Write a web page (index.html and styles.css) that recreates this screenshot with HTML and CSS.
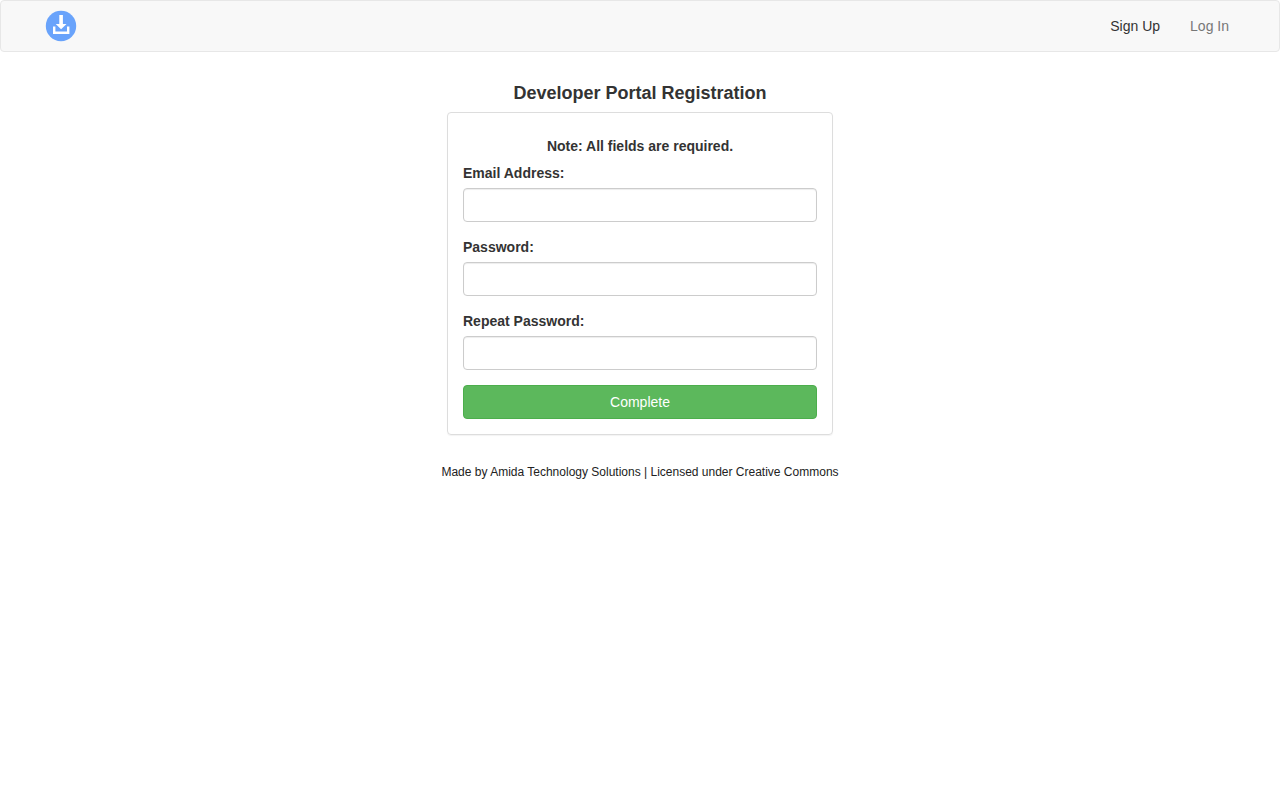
FILE: index.html
```html
<!DOCTYPE html>
<html lang="en">
<head>
<meta charset="utf-8">
<meta name="viewport" content="width=device-width, initial-scale=1">
<title>Developer Portal Registration</title>
<link rel="stylesheet" href="styles.css">
</head>
<body>
<nav class="navbar">
  <a class="brand" href="#" aria-label="Home">
    <svg class="logo" viewBox="0 0 30 30" aria-hidden="true">
      <circle cx="15" cy="15" r="15.2" fill="#69a3fb"/>
      <path d="M13.3 4h3.6v9h3.6L15.1 18.2 9.7 13h3.6z" fill="#fff"/>
      <path d="M7 15.4h2.4v5H21v-5h2.4v7.5H7z" fill="#fff"/>
    </svg>
  </a>
  <ul class="nav">
    <li><a class="nav-link active" href="#">Sign Up</a></li>
    <li><a class="nav-link" href="#">Log In</a></li>
  </ul>
</nav>
<main class="content">
  <h4 class="title">Developer Portal Registration</h4>
  <form class="panel">
    <h5 class="note">Note: All fields are required.</h5>
    <div class="field">
      <label class="label" for="email">Email Address:</label>
      <input class="input" type="email" id="email" required>
    </div>
    <div class="field">
      <label class="label" for="password">Password:</label>
      <input class="input" type="password" id="password" required>
    </div>
    <div class="field">
      <label class="label" for="repeat">Repeat Password:</label>
      <input class="input" type="password" id="repeat" required>
    </div>
    <button class="submit" type="submit">Complete</button>
  </form>
</main>
<footer class="footer">Made by Amida Technology Solutions | Licensed under Creative Commons</footer>
</body>
</html>
```

FILE: styles.css
```css
* {
  box-sizing: border-box;
}

body {
  margin: 0;
  background: #fff;
  color: #333;
  font-family: "Helvetica Neue", Helvetica, "Liberation Sans", Arial, sans-serif;
  font-size: 14px;
  line-height: 20px;
}

.navbar {
  display: flex;
  align-items: center;
  justify-content: space-between;
  min-height: 52px;
  padding: 0 35px 0 45px;
  border: 1px solid #e7e7e7;
  border-radius: 4px;
  background: #f8f8f8;
}

.brand,
.logo {
  display: block;
}

.logo {
  width: 30px;
  height: 30px;
  overflow: visible;
}

.nav {
  display: flex;
  margin: 0;
  padding: 0;
  list-style: none;
}

.nav-link {
  display: block;
  padding: 15px;
  color: #777;
  text-decoration: none;
}

.nav-link.active {
  color: #333;
}

.content {
  max-width: 386px;
  margin: 30px auto 0;
}

.title {
  margin: 0 0 8px;
  font-size: 18px;
  line-height: 22px;
  text-align: center;
}

.panel {
  padding: 25px 15px 15px;
  border: 1px solid #ddd;
  border-radius: 4px;
  box-shadow: 0 1px 1px rgba(0, 0, 0, 0.05);
}

.note {
  margin: 0 0 8px;
  font-size: 14px;
  line-height: 17px;
  text-align: center;
}

.field {
  margin-bottom: 15px;
}

.label {
  display: block;
  margin-bottom: 5px;
  font-weight: bold;
}

.input {
  display: block;
  width: 100%;
  height: 34px;
  padding: 6px 12px;
  border: 1px solid #ccc;
  border-radius: 4px;
  background: #fff;
  color: #555;
  font: inherit;
  box-shadow: inset 0 1px 1px rgba(0, 0, 0, 0.075);
}

.submit {
  display: block;
  width: 100%;
  height: 34px;
  padding: 6px 12px;
  border: 1px solid #4cae4c;
  border-radius: 4px;
  background: #5cb85c;
  color: #fff;
  font: inherit;
  cursor: pointer;
}

.footer {
  margin: 30px 0 10px;
  color: #222;
  font-size: 12px;
  line-height: 15px;
  text-align: center;
}
```
